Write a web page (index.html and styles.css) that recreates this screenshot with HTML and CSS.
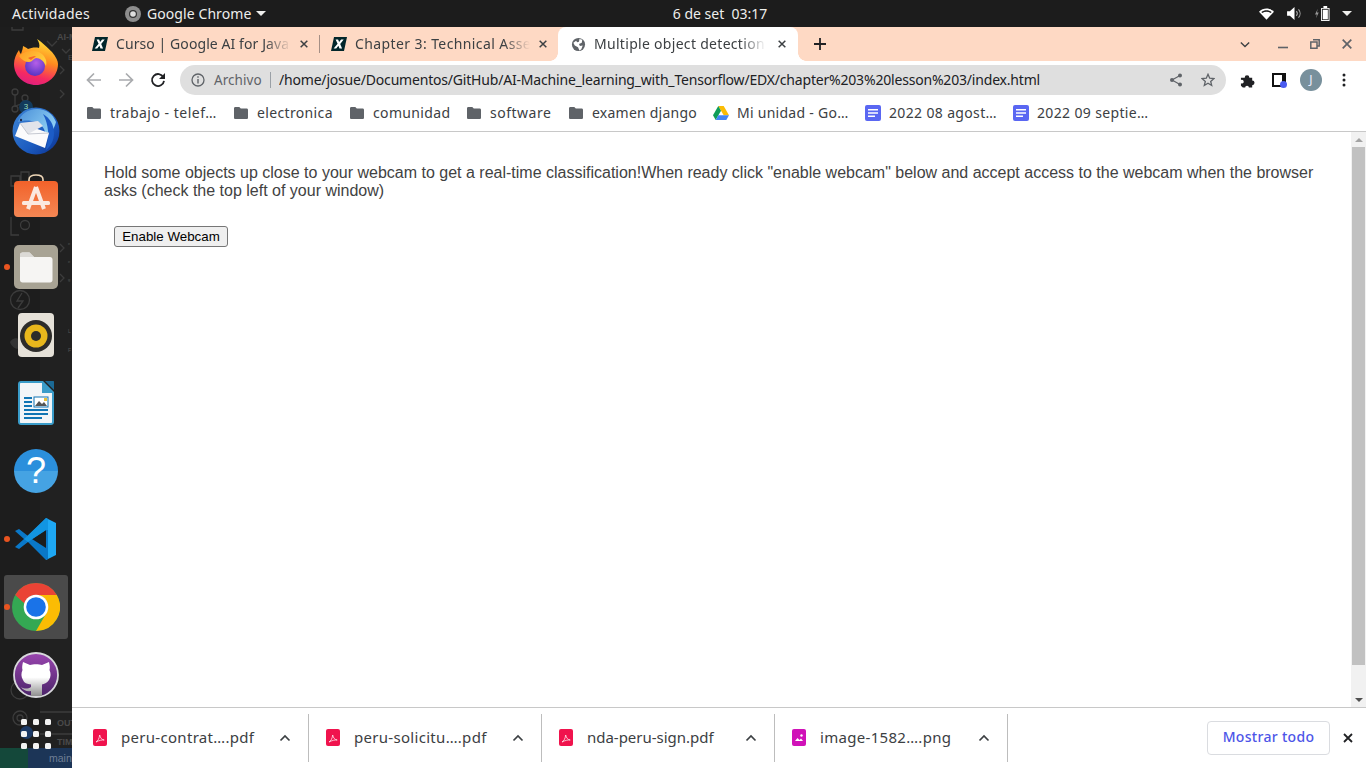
FILE: index.html
```html
<!DOCTYPE html>
<html lang="es">
<head>
<meta charset="utf-8">
<title>Multiple object detection</title>
<link rel="stylesheet" href="styles.css">
</head>
<body>
<svg class="defs" width="0" height="0">
  <defs>
    <symbol id="i-x" viewBox="0 0 12 12"><path d="M2 2l8 8M10 2l-8 8" fill="none" stroke="currentColor" stroke-width="1.800"/></symbol>
    <symbol id="i-edx" viewBox="0 0 16 16"><path d="M3 1h13l-3 14H0z" fill="#02262b"/><path d="M4.600 3.500h2.500l1 2.600 2-2.600h2.600L9.200 8l1.900 4.500H8.500L7.400 9.700l-2.200 2.800H2.600l4-4.700z" fill="#fff"/></symbol>
    <symbol id="i-folder" viewBox="0 0 14 12"><path d="M1.300 0h4l1.500 1.600h5.900c.7 0 1.300.6 1.300 1.300v7.800c0 .7-.6 1.300-1.300 1.300H1.300C.6 12 0 11.400 0 10.700V1.300C0 .6.600 0 1.300 0z" fill="#5f6368"/></symbol>
    <symbol id="i-doc" viewBox="0 0 16 16"><rect width="16" height="16" rx="2" fill="#5a67f2"/><path d="M3 4h10v1.600H3zM3 7.200h10v1.600H3zM3 10.400h7V12H3z" fill="#fff"/></symbol>
    <symbol id="i-pdf" viewBox="0 0 14 17"><rect width="14" height="17" rx="2" fill="#f0134d"/><path d="M3 13c2-1 3.200-3.500 3.700-7 .6 3 2 4.600 4.500 5-2.500-.2-5 .4-8.200 2z" fill="none" stroke="#fff" stroke-width=".7"/></symbol>
    <symbol id="i-png" viewBox="0 0 14 17"><rect width="14" height="17" rx="2" fill="#d012b8"/><path d="M3 12l2.500-3 2 2 1.500-1.500L11 12z" fill="#fff"/><circle cx="9.500" cy="6.500" r="1.200" fill="#fff"/></symbol>
    <symbol id="i-up" viewBox="0 0 12 8"><path d="M1.500 6.500L6 2l4.500 4.500" fill="none" stroke="currentColor" stroke-width="1.700"/></symbol>
  </defs>
</svg>

<header class="topbar">
  <div class="topbar-left">
    <span class="activities">Actividades</span>
    <span class="appname">
      <svg class="app-icon" viewBox="0 0 16 16"><circle cx="8" cy="8" r="8" fill="#8d8d8d"/><circle cx="8" cy="8" r="4" fill="#333"/><circle cx="8" cy="8" r="2.800" fill="#ddd"/></svg>
      Google Chrome
      <span class="caret"></span>
    </span>
  </div>
  <div class="clock">6 de set&nbsp; 03:17</div>
  <div class="tray">
    <svg class="tray-wifi" viewBox="0 0 16 12"><path d="M0 3.500C4.500-.9 11.500-.9 16 3.500L8 12z" fill="#fff"/><path d="M2.500 3.800c3.300-2.300 7.700-2.300 11 0L12.500 5c-2.800-1.700-6.200-1.700-9 0z" fill="#1c1c1c"/></svg>
    <svg class="tray-vol" viewBox="0 0 16 14"><path d="M0 4.500h3L8 0v14l-5-4.500H0z" fill="#fff"/><path d="M10 4.500c1.300 1.500 1.300 3.500 0 5M12.300 2.500c2.300 2.600 2.300 6.400 0 9" fill="none" stroke="#aaa" stroke-width="1.100"/></svg>
    <svg class="tray-bat" viewBox="0 0 16 16"><path d="M3 3L0 9h2l-1 4 3-6H2z" fill="#999"/><path d="M9 2V0h4v2h2.500v14H6.500V2z" fill="#fff"/><rect x="7.500" y="3" width="7" height="12" fill="#1c1c1c"/><rect x="8.300" y="4" width="5.400" height="10.200" fill="#fff"/></svg>
    <span class="caret"></span>
  </div>
</header>

<main class="desktop">
  <nav class="dock">
    <div class="dock-ghost">
      <svg class="ghost-art" viewBox="0 0 72 741">
        <g fill="none" stroke="#3c3c3c" stroke-width="1.300">
          <path d="M12 0v3h11V0"/>
          <circle cx="15" cy="65" r="3"/><circle cx="15" cy="82" r="3"/><circle cx="25" cy="71" r="3"/><path d="M15 68v11M25 74c0 4-10 3-10 6"/>
          <path d="M11 149h9v10h-9zM21 145h8v9h-8z"/>
          <path d="M11 190v18h8"/><circle cx="25" cy="198" r="4.500"/>
          <circle cx="20" cy="273" r="9.500"/><path d="M22 266l-5 8h6l-5 7"/>
          <circle cx="20" cy="663" r="9"/>
          <circle cx="20" cy="691" r="7"/><circle cx="20" cy="691" r="3"/>
          <path d="M40 685h32M40 707h32"/>
          <path d="M47 14l5 5 5-5M60 39l4 4-4 4M60 63l4 4-4 4M62 22l4 4 4-4M60 247l4 4-4 4M60 217l4 4-4 4"/>
        </g>
        <path d="M10 315c2-4 7-5 10-2v8c-3 2-8 0-10-6z" fill="#333"/>
      </svg>
      <span class="ghost g-ai">AI-M</span>
      <span class="ghost g-e">E</span>
      <span class="ghost g-e2">e</span>
      <span class="ghost g-e3">e</span>
      <span class="ghost g-g">g</span>
      <span class="ghost g-l">L</span>
      <span class="ghost g-r">F</span>
      <span class="ghost g-out">OUT</span>
      <span class="ghost g-tim">TIM</span>
      <span class="g-green"></span>
      <span class="g-blue">main</span>
      <span class="g-badge">3</span>
      <span class="g-update"></span>
    </div>

    <div class="dock-item">
      <svg class="ico-ff" viewBox="0 0 44 46">
        <defs>
          <linearGradient id="ffa" x1=".7" y1="0" x2=".4" y2="1"><stop offset="0" stop-color="#ffe53a"/><stop offset=".45" stop-color="#ff8a1f"/><stop offset=".8" stop-color="#f52a62"/><stop offset="1" stop-color="#e0207e"/></linearGradient>
          <radialGradient id="ffb" cx=".55" cy=".35" r=".7"><stop offset="0" stop-color="#b55fe8"/><stop offset="1" stop-color="#5030c0"/></radialGradient>
          <linearGradient id="ffc" x1="0" y1="0" x2="1" y2=".6"><stop offset="0" stop-color="#ff9a26"/><stop offset="1" stop-color="#ffcf3c"/></linearGradient>
        </defs>
        <path d="M23 0c5 3 11 9 15 13 4 5 6 9 6 12 0 12-10 21-22 21S0 37 0 25c0-5 2-10 5-14 .5 2 1 3 2 4 1-3 2-6 2-8 2 1 4 2 5 3 3-1 7-2 11-1 1-3 0-6-2-9z" fill="url(#ffa)"/>
        <circle cx="21" cy="27" r="10" fill="url(#ffb)"/>
        <path d="M5 17c4-4 9-5 14-5 6 0 11 3 13 9 .5 2 .5 4 0 6-2-5-6-8-10-8l-2 1c-2 2-3 3-5 3-4 0-7-2-10-6z" fill="url(#ffc)"/>
        <path d="M22 17c-3 0-6 1-8 2l3 2c2-2 3-2 5-4z" fill="#f7642a"/>
      </svg>
    </div>

    <div class="dock-item">
      <svg class="ico48" viewBox="0 0 48 48">
        <defs>
          <linearGradient id="tb" x1="0" y1="0" x2="1" y2="1"><stop offset="0" stop-color="#3f86d6"/><stop offset=".6" stop-color="#1c5cc0"/><stop offset="1" stop-color="#0a2f8f"/></linearGradient>
          <linearGradient id="tb2" x1="0" y1="0" x2="1" y2=".6"><stop offset="0" stop-color="#4a8fd8"/><stop offset="1" stop-color="#8fd0f4"/></linearGradient>
        </defs>
        <circle cx="24" cy="24" r="23.500" fill="url(#tb)"/>
        <path d="M6 15c3-8 10-13 19-13 9 0 16 5 19 13-2 8-6 12-10 14-1-7-4-12-10-14-6-2-13-2-18 0z" fill="url(#tb2)"/>
        <path d="M31 7c7 4 11 11 11 19 0 7-3 13-8 17 1-6 3-12 2-19-.5-6-2-12-5-17z" fill="#1c5cc6"/>
        <path d="M3 29L8 16l29 10-4 15z" fill="#fbfbfc"/>
        <path d="M8 16l18-2 5 5-15 8z" fill="#e2e4ea"/>
        <path d="M8 16l8 11 21-1" fill="none" stroke="#b9bcc6" stroke-width=".8"/>
        <circle cx="9" cy="13" r="1.200" fill="#1c2c50"/>
      </svg>
    </div>

    <div class="dock-item">
      <svg class="ico44 store" viewBox="0 0 44 44">
        <defs><linearGradient id="st" x1="0" y1="0" x2="0" y2="1"><stop offset="0" stop-color="#f2622a"/><stop offset="1" stop-color="#f48754"/></linearGradient></defs>
        <path d="M15 8V5.500C15 2.500 18 1 22 1s7 1.500 7 4.500V8" fill="none" stroke="#f0d8b8" stroke-width="1.600"/>
        <rect y="7" width="44" height="36" rx="4" fill="url(#st)"/>
        <path d="M22 13l-8 22M22 13l8 22" stroke="#fbe9e0" stroke-width="4" fill="none"/>
        <rect x="8" y="27" width="28" height="4" rx="1.500" fill="#fbe9e0"/>
      </svg>
    </div>

    <div class="dock-item">
      <span class="run-dot"></span>
      <svg class="ico44" viewBox="0 0 44 44">
        <rect width="44" height="44" rx="5" fill="#a8a394"/>
        <path d="M6 10c0-1.500 1-2.500 2.500-2.500h7L20 12h16c1.500 0 2.500 1 2.500 2.500V35c0 1.500-1 2.500-2.500 2.500H8.500C7 37.500 6 36.500 6 35z" fill="#f6f5f3"/>
        <path d="M6 10c0-1.500 1-2.500 2.500-2.500h7L20 12H6z" fill="#dcdad6"/>
      </svg>
    </div>

    <div class="dock-item">
      <svg class="ico-rb" viewBox="0 0 36 44">
        <rect width="36" height="44" rx="4" fill="#e5e1d8"/>
        <circle cx="18" cy="23" r="16" fill="#2d2c2a"/>
        <circle cx="18" cy="23" r="11.500" fill="#e8b71c"/>
        <circle cx="18" cy="23" r="5" fill="#2d2c2a"/>
      </svg>
    </div>

    <div class="dock-item">
      <svg class="ico-rb" viewBox="0 0 36 44">
        <path d="M3 0h22l11 11v30c0 1.700-1.300 3-3 3H3c-1.700 0-3-1.300-3-3V3c0-1.700 1.300-3 3-3z" fill="#3a9cc9"/>
        <path d="M3 2h21v10h10v29c0 .6-.4 1-1 1H3c-.6 0-1-.4-1-1V3c0-.6.400-1 1-1z" fill="#f2f5f8"/>
        <path d="M27 0l9 9V1c0-.6-.4-1-1-1z" fill="#1b6a96"/>
        <path d="M6 16h8v2H6zM6 20h8v2H6zM6 24h8v2H6zM6 28h24v2H6zM6 32h24v2H6zM6 36h18v2H6z" fill="#1175b4"/>
        <rect x="16" y="16" width="14" height="10" fill="#fff" stroke="#1175b4"/>
        <path d="M17 25l4-5 3 3 2-2 3 4z" fill="#555"/>
        <rect x="26" y="17" width="3" height="3" fill="#e8c13a"/>
      </svg>
    </div>

    <div class="dock-item">
      <div class="help-icon">?</div>
    </div>

    <div class="dock-item">
      <span class="run-dot"></span>
      <svg class="ico44" viewBox="0 0 44 44">
        <path d="M32 1l10 5v32l-10 5V1z" fill="#1ea8f4"/>
        <path d="M32 1L14 19 5 12 1 14l9 8-9 8 4 2 9-7 18 18 2-1V3z" fill="#0a78c8"/>
        <path d="M32 13v18L18 22z" fill="#1c1c1c"/>
        <path d="M32 1l2 1v11l-2 0L14 25l-4-3z" fill="#1295e2"/>
      </svg>
    </div>

    <div class="dock-item dock-active">
      <span class="run-dot"></span>
      <svg class="ico48" viewBox="0 0 48 48">
        <circle cx="24" cy="24" r="24" fill="#34a853"/>
        <path d="M24 0a24 24 0 0 1 20.800 12H24a12 12 0 0 0-11.500 8.500L3.200 12A24 24 0 0 1 24 0z" fill="#ea4335"/>
        <path d="M44.800 12A24 24 0 0 1 24 48l10.400-18A12 12 0 0 0 34.400 18 12 12 0 0 0 24 12z" fill="#fbbc04"/>
        <circle cx="24" cy="24" r="12.300" fill="#fff"/>
        <circle cx="24" cy="24" r="9.800" fill="#1a73e8"/>
      </svg>
    </div>

    <div class="dock-item">
      <svg class="ico46" viewBox="0 0 46 46">
        <defs><linearGradient id="gh" x1="0" y1="0" x2="0" y2="1"><stop offset="0" stop-color="#9a45b0"/><stop offset="1" stop-color="#4a2468"/></linearGradient>
        <linearGradient id="gh2" x1="0" y1="0" x2="0" y2="1"><stop offset=".45" stop-color="#fff"/><stop offset="1" stop-color="#8f8f8f"/></linearGradient></defs>
        <circle cx="23" cy="23" r="22" fill="url(#gh)" stroke="#d8d8dc" stroke-width="1.800"/>
        <path d="M10 10l7 3c3-1 9-1 12 0l7-3c1 4 1 6 .5 8 1.500 3 1.500 7-.5 10-2 3-5 4-7 4.500V44H18v-5c-4 1-8-1-10-4 3 2 7 2 10 0v-2.500c-4-.5-7-1.500-8-4.500-2-3-2-7-.5-10-.5-2-.5-4 .5-8z" fill="url(#gh2)"/>
      </svg>
    </div>

    <div class="dock-item">
      <div class="apps-grid"><i></i><i></i><i></i><i></i><i></i><i></i><i></i><i></i><i></i></div>
    </div>
  </nav>

  <section class="chrome">
    <div class="tabstrip">
      <div class="tab tab-1">
        <svg class="favicon"><use href="#i-edx"/></svg>
        <span class="tab-title">Curso | Google AI for Java</span>
        <svg class="tab-x"><use href="#i-x"/></svg>
      </div>
      <span class="tab-sep"></span>
      <div class="tab tab-2">
        <svg class="favicon"><use href="#i-edx"/></svg>
        <span class="tab-title">Chapter 3: Technical Asse</span>
        <svg class="tab-x"><use href="#i-x"/></svg>
      </div>
      <div class="tab tab-active">
        <svg class="favicon" viewBox="0 0 16 16"><circle cx="8" cy="8" r="7" fill="#5f6368"/><path d="M2.500 6l3-2 1 1.500 2-.5.500-3 3 1-.5 3-3 1.500 1 2 3-.5L11 13l-2 1.500L7.500 11 4 9z" fill="#fff"/></svg>
        <span class="tab-title">Multiple object detection</span>
        <svg class="tab-x"><use href="#i-x"/></svg>
      </div>
      <svg class="newtab" viewBox="0 0 12 12"><path d="M6 0v12M0 6h12" stroke="#202124" stroke-width="1.800" fill="none"/></svg>
      <div class="win-controls">
        <svg class="win-chev" viewBox="0 0 12 8"><path d="M1 1.500l5 5 5-5" fill="none" stroke="#3c4043" stroke-width="1.600"/></svg>
        <svg class="win-min" viewBox="0 0 10 10"><path d="M0 8.500h10" stroke="#5f6368" stroke-width="1.600"/></svg>
        <svg class="win-max" viewBox="0 0 10 10"><path d="M3 .8h6.200V7H7M.8 3h6.200v6.200H.8z" fill="none" stroke="#5f6368" stroke-width="1.500"/></svg>
        <svg class="win-close" viewBox="0 0 10 10"><path d="M.7.700l8.600 8.600M9.300.7L.7 9.300" stroke="#5f6368" stroke-width="1.700"/></svg>
      </div>
    </div>

    <div class="toolbar">
      <svg class="nav-ico" viewBox="0 0 16 16"><path d="M15 8H2M8 1.500L1.500 8 8 14.500" fill="none" stroke="#a9abae" stroke-width="1.700"/></svg>
      <svg class="nav-ico" viewBox="0 0 16 16"><path d="M1 8h13M8 1.500L14.500 8 8 14.500" fill="none" stroke="#a9abae" stroke-width="1.700"/></svg>
      <svg class="nav-ico" viewBox="0 0 16 16"><path d="M13.400 5.300A6 6 0 1 0 14 8.800" fill="none" stroke="#202124" stroke-width="1.800"/><path d="M15 1v6H9z" fill="#202124"/></svg>
      <div class="omnibox">
        <svg class="omni-info" viewBox="0 0 14 14"><circle cx="7" cy="7" r="6" fill="none" stroke="#5f6368" stroke-width="1.300"/><path d="M7 6v4.500M7 3.300v1.500" stroke="#5f6368" stroke-width="1.400"/></svg>
        <span class="omni-label">Archivo</span>
        <span class="omni-sep"></span>
        <span class="omni-url">/home/josue/Documentos/GitHub/AI-Machine_learning_with_Tensorflow/EDX/chapter%203%20lesson%203/index.html</span>
        <svg class="omni-share" viewBox="0 0 14 14"><path d="M11 2.500L3 7l8 4.500" fill="none" stroke="#5f6368" stroke-width="1.200"/><circle cx="11" cy="2.500" r="2" fill="#5f6368"/><circle cx="3" cy="7" r="2" fill="#5f6368"/><circle cx="11" cy="11.500" r="2" fill="#5f6368"/></svg>
        <svg class="omni-star" viewBox="0 0 14 14"><path d="M7 1.300l1.700 3.900 4.200.4-3.200 2.800 1 4.100L7 10.300l-3.700 2.200 1-4.100L1.100 5.600l4.200-.4z" fill="none" stroke="#5f6368" stroke-width="1.300"/></svg>
      </div>
      <svg class="tool-ext" viewBox="0 0 16 16"><path d="M1 5h4a2.500 2.500 0 1 1 5 0h3v3a2.500 2.500 0 1 1 0 5v2.500H9.500a2 2 0 1 0-4 0H3L1 13.500v-2.500a2 2 0 1 0 0-3.500z" fill="#202124"/></svg>
      <span class="tool-panel"><span class="tool-panel-dot"></span></span>
      <span class="avatar">J</span>
      <svg class="tool-menu" viewBox="0 0 4 14"><circle cx="2" cy="2" r="1.500" fill="#202124"/><circle cx="2" cy="7" r="1.500" fill="#202124"/><circle cx="2" cy="12" r="1.500" fill="#202124"/></svg>
    </div>

    <div class="bookmarks">
      <span class="bm bm-1"><svg class="bm-folder"><use href="#i-folder"/></svg>trabajo - telef…</span>
      <span class="bm bm-2"><svg class="bm-folder"><use href="#i-folder"/></svg>electronica</span>
      <span class="bm bm-3"><svg class="bm-folder"><use href="#i-folder"/></svg>comunidad</span>
      <span class="bm bm-4"><svg class="bm-folder"><use href="#i-folder"/></svg>software</span>
      <span class="bm bm-5"><svg class="bm-folder"><use href="#i-folder"/></svg>examen django</span>
      <span class="bm bm-6"><svg class="bm-doc" viewBox="0 0 16 14"><path d="M5.300 0h5.400L16 9.300h-5.300z" fill="#fbbc04"/><path d="M5.300 0L0 9.300 2.700 14l5.300-9.300z" fill="#0f9d58"/><path d="M2.700 14h10.600L16 9.300H5.300z" fill="#4285f4"/></svg>Mi unidad - Go…</span>
      <span class="bm bm-7"><svg class="bm-doc"><use href="#i-doc"/></svg>2022 08 agost…</span>
      <span class="bm bm-8"><svg class="bm-doc"><use href="#i-doc"/></svg>2022 09 septie…</span>
    </div>

    <div class="viewport">
      <article class="page">
        <p class="page-text">Hold some objects up close to your webcam to get a real-time classification!When ready click "enable webcam" below and accept access to the webcam when the browser asks (check the top left of your window)</p>
        <button class="webcam-btn" type="button">Enable Webcam</button>
      </article>
      <div class="scrollbar">
        <span class="sb-arrow sb-up"></span>
        <span class="sb-track"><span class="sb-thumb"></span></span>
        <span class="sb-arrow sb-down"></span>
      </div>
    </div>

    <footer class="downloads">
      <div class="dl"><svg class="dl-ico"><use href="#i-pdf"/></svg><span class="dl-name dl-long">peru-contrat….pdf</span><svg class="dl-up"><use href="#i-up"/></svg></div>
      <div class="dl"><svg class="dl-ico"><use href="#i-pdf"/></svg><span class="dl-name dl-long">peru-solicitu….pdf</span><svg class="dl-up"><use href="#i-up"/></svg></div>
      <div class="dl"><svg class="dl-ico"><use href="#i-pdf"/></svg><span class="dl-name">nda-peru-sign.pdf</span><svg class="dl-up"><use href="#i-up"/></svg></div>
      <div class="dl"><svg class="dl-ico"><use href="#i-png"/></svg><span class="dl-name dl-long">image-1582….png</span><svg class="dl-up"><use href="#i-up"/></svg></div>
      <span class="dl-spacer"></span>
      <button class="show-all" type="button">Mostrar todo</button>
      <svg class="dl-close"><use href="#i-x"/></svg>
    </footer>
  </section>
</main>
</body>
</html>
```

FILE: styles.css
```css
* { box-sizing: border-box; }
html, body { margin: 0; height: 100%; overflow: hidden; }
body {
  width: 1366px;
  height: 768px;
  display: flex;
  flex-direction: column;
  font-family: "Noto Sans", "Open Sans", sans-serif;
  background: #1f1f1f;
}
.defs { position: absolute; }

/* top bar */
.topbar {
  height: 27px;
  flex: none;
  background: #1c1c1c;
  color: #eeeeec;
  display: grid;
  grid-template-columns: 1fr auto 1fr;
  align-items: center;
  font-size: 14px;
  line-height: 27px;
}
.topbar-left { display: flex; align-items: center; padding-left: 12px; }
.activities { width: 113px; letter-spacing: .3px; }
.appname { display: flex; align-items: center; gap: 6px; letter-spacing: .08px; }
.app-icon { width: 16px; height: 16px; }
.caret {
  width: 0; height: 0;
  border-left: 5px solid transparent;
  border-right: 5px solid transparent;
  border-top: 5px solid #eeeeec;
  margin-left: -1px;
}
.clock { font-size: 14px; margin-left: 74px; }
.tray { display: flex; align-items: center; justify-content: flex-end; padding-right: 14px; }
.tray-wifi { width: 15px; height: 12px; margin-right: 13px; }
.tray-vol { width: 15px; height: 13px; margin-right: 13px; }
.tray-bat { width: 15px; height: 15px; margin-right: 13px; }

.desktop { flex: 1; display: flex; min-height: 0; }

/* dock */
.dock {
  width: 72px;
  flex: none;
  position: relative;
  display: flex;
  flex-direction: column;
  padding-top: 2px;
  background: linear-gradient(90deg, #1d1d1d 0, #1d1d1d 40px, #212121 40px);
  overflow: hidden;
}
.dock-item {
  position: relative;
  height: 68px;
  flex: none;
  display: flex;
  align-items: center;
  justify-content: center;
}
.dock-active::before {
  content: "";
  position: absolute;
  inset: 2px 4px;
  background: #4a4a4a;
  border-radius: 3px;
}
.dock-item svg { position: relative; }
.ico44 { width: 44px; height: 44px; }
.ico46 { width: 46px; height: 46px; }
.ico48 { width: 48px; height: 48px; }
.ico-ff { width: 44px; height: 46px; margin-top: -2px; }
.store { margin-top: -6px; }
.ico-rb { width: 36px; height: 44px; }
.run-dot {
  position: absolute;
  left: 4px;
  top: 31px;
  width: 6px;
  height: 6px;
  border-radius: 50%;
  background: #e95420;
  z-index: 2;
}
.help-icon {
  position: relative;
  width: 44px;
  height: 44px;
  border-radius: 50%;
  background: linear-gradient(180deg, #2b8fdc 0 50%, #45a3e3 50% 100%);
  color: #fff;
  font: 36px/44px "Liberation Sans", sans-serif;
  text-align: center;
}
.apps-grid {
  position: relative;
  display: grid;
  grid-template-columns: repeat(3, 6px);
  grid-auto-rows: 6px;
  gap: 6px;
  margin-top: -18px;
}
.apps-grid i { background: #f3f3f3; border-radius: 1.500px; }

.dock-ghost { position: absolute; inset: 0; pointer-events: none; font-size: 11px; color: #4a4a4a; }
.ghost-art { position: absolute; left: 0; top: 0; width: 72px; height: 741px; }
.ghost { position: absolute; white-space: nowrap; line-height: 12px; font-family: "Liberation Sans", sans-serif; }
.g-ai { left: 57px; top: 4px; font-weight: 700; font-size: 9px; }
.g-e { left: 68px; top: 25px; font-size: 8px; }
.g-e2 { left: 68px; top: 211px; font-size: 4px; color: #555; }
.g-e3 { left: 68px; top: 229px; font-size: 4px; color: #555; }
.g-g { left: 68px; top: 247px; font-size: 4px; color: #555; }
.g-l { left: 68px; top: 298px; font-size: 5px; color: #555; }
.g-r { left: 68px; top: 317px; font-size: 5px; color: #555; }
.g-out { left: 57px; top: 690px; font-weight: 700; font-size: 9px; }
.g-tim { left: 57px; top: 709px; font-weight: 700; font-size: 9px; }
.g-green { position: absolute; left: 0; bottom: 0; width: 28px; height: 20px; background: #14483a; }
.g-blue { position: absolute; left: 28px; bottom: 0; width: 44px; height: 20px; background: #1c3557; color: #6f7f95; font: 10.500px/20px "Liberation Sans", sans-serif; padding-left: 21px; }
.g-badge { position: absolute; left: 19px; top: 73px; width: 14px; height: 14px; border-radius: 50%; background: #123a5c; color: #9db; font: 8px/14px "Liberation Sans", sans-serif; text-align: center; }
.g-update { position: absolute; left: 20px; top: 699px; width: 13px; height: 13px; border-radius: 50%; background: #1c3a66; }

/* chrome window */
.chrome { flex: 1; min-width: 0; display: flex; flex-direction: column; background: #fff; }

.tabstrip {
  height: 34px;
  flex: none;
  background: #fed9c4;
  display: flex;
  align-items: center;
  padding-left: 8px;
  color: #3c4043;
}
.tab {
  height: 34px;
  flex: none;
  display: flex;
  align-items: center;
  font-size: 14px;
}
.tab-1 { width: 239px; padding-left: 12px; }
.tab-2 { width: 238px; padding-left: 11px; }
.tab-sep { width: 1px; height: 18px; background: #a58f85; flex: none; }
.favicon { width: 16px; height: 16px; flex: none; }
.tab-title {
  margin: -2px 0 0 8px;
  width: 175px;
  flex: none;
  white-space: nowrap;
  overflow: hidden;
  -webkit-mask-image: linear-gradient(90deg, #000 85%, transparent);
  mask-image: linear-gradient(90deg, #000 85%, transparent);
}
.tab-1 .tab-title { letter-spacing: .08px; }
.tab-2 .tab-title { letter-spacing: .4px; }
.tab-x { width: 10px; height: 10px; flex: none; margin-left: 8px; color: #3c4043; }
.tab-active {
  background: #fff;
  width: 240px;
  padding-left: 13px;
  border-radius: 8px 8px 0 0;
  position: relative;
}
.tab-active::before, .tab-active::after {
  content: "";
  position: absolute;
  bottom: 0;
  width: 8px;
  height: 8px;
}
.tab-active::before { left: -8px; background: radial-gradient(circle at 0 0, transparent 7.500px, #fff 8px); }
.tab-active::after { right: -8px; background: radial-gradient(circle at 100% 0, transparent 7.500px, #fff 8px); }
.tab-active .favicon { width: 15px; height: 15px; }
.tab-active .tab-title { margin-left: 8px; width: 172px; letter-spacing: .3px; }
.tab-active .tab-x { margin-left: 11px; }
.newtab { width: 12px; height: 12px; margin-left: 16px; flex: none; }
.win-controls { margin-left: auto; display: flex; align-items: center; padding-right: 14px; }
.win-chev { width: 10px; height: 7px; margin-right: 28px; }
.win-min { width: 10px; height: 10px; margin-right: 22px; }
.win-max { width: 10px; height: 10px; margin-right: 22px; }
.win-close { width: 10px; height: 10px; }

.toolbar {
  height: 38px;
  flex: none;
  display: flex;
  align-items: center;
  padding-left: 14px;
  background: #fff;
}
.nav-ico { width: 16px; height: 16px; flex: none; margin-right: 16px; }
.omnibox {
  width: 1046px;
  height: 30px;
  margin-left: -2px;
  flex: none;
  border-radius: 15px;
  background: #dfdfdf;
  display: flex;
  align-items: center;
  padding-left: 11px;
  font-size: 14px;
  white-space: nowrap;
}
.omni-info { width: 14px; height: 14px; flex: none; }
.omni-label { margin-left: 9px; color: #5f6368; font-size: 13.500px; width: 48px; letter-spacing: .05px; }
.omni-sep { width: 1px; height: 16px; background: #9aa0a6; margin: 0 8px; flex: none; }
.omni-url { color: #202124; width: 850px; overflow: hidden; flex: none; letter-spacing: -.19px; margin-top: -1px; }
.omni-share { width: 14px; height: 14px; margin-left: 40px; flex: none; }
.omni-star { width: 14px; height: 14px; margin-left: 18px; flex: none; }
.tool-ext { width: 15px; height: 15px; margin-left: 14px; flex: none; }
.tool-panel {
  position: relative;
  width: 14px;
  height: 14px;
  margin-left: 17px;
  border: 2px solid #111;
  border-right-width: 4px;
  flex: none;
}
.tool-panel-dot { position: absolute; right: -5px; bottom: -3px; width: 7px; height: 7px; border-radius: 50%; background: #4a5cf0; }
.avatar {
  width: 22px;
  height: 22px;
  margin-left: 14px;
  border-radius: 50%;
  background: #78909c;
  color: #eef;
  font-size: 12px;
  line-height: 22px;
  text-align: center;
  flex: none;
}
.tool-menu { width: 4px; height: 14px; margin-left: 20px; flex: none; }

.bookmarks {
  height: 33px;
  flex: none;
  display: flex;
  align-items: center;
  padding: 0 0 6px 15px;
  border-bottom: 1px solid #c8c8c8;
  font-size: 14px;
  letter-spacing: .35px;
  color: #3c4043;
  white-space: nowrap;
}
.bm { display: flex; align-items: center; flex: none; }
.bm-folder { width: 14px; height: 12px; margin: 2px 9px 0 0; flex: none; }
.bm-doc { width: 16px; height: 16px; margin: 2px 8px 0 0; flex: none; }
.bm-1 { width: 147px; letter-spacing: .5px; }
.bm-2 { width: 116px; }
.bm-3 { width: 117px; }
.bm-4 { width: 102px; letter-spacing: .5px; }
.bm-5 { width: 144px; letter-spacing: .23px; }
.bm-6 { width: 152px; letter-spacing: .27px; }
.bm-7 { width: 148px; }

.viewport { flex: 1; min-height: 0; display: flex; background: #fff; }
.page { flex: 1; min-width: 0; padding: 32px 32px 0; }
.page-text {
  margin: 0;
  font: 16px/18px "Liberation Sans", sans-serif;
  color: #424242;
}
.webcam-btn {
  display: block;
  margin: 26px 0 0 10px;
  width: 114px;
  height: 21px;
  padding: 0;
  font: 13.333px "Liberation Sans", sans-serif;
  color: #000;
  background: #efefef;
  border: 1px solid #767676;
  border-radius: 3px;
}
.scrollbar { width: 15px; flex: none; background: #f1f1f1; display: flex; flex-direction: column; align-items: center; }
.sb-arrow { height: 15px; flex: none; width: 15px; position: relative; }
.sb-arrow::after { content: ""; position: absolute; left: 4px; top: 6px; border-left: 4px solid transparent; border-right: 4px solid transparent; }
.sb-up::after { border-bottom: 4px solid #a3a3a3; }
.sb-down::after { border-top: 4px solid #505050; }
.sb-track { flex: 1; width: 100%; padding: 0 1px; }
.sb-thumb { display: block; height: 518px; background: #c1c1c1; }

.downloads {
  height: 61px;
  flex: none;
  display: flex;
  align-items: center;
  border-top: 1px solid #c8c8c8;
  padding-left: 4px;
  background: #fff;
  color: #3c4043;
}
.dl {
  width: 233px;
  height: 48px;
  flex: none;
  display: flex;
  align-items: center;
  padding-left: 17px;
  border-right: 1px solid #bdbdbd;
  font-size: 15px;
}
.dl-ico { width: 14px; height: 17px; flex: none; margin-top: -1px; }
.dl-name { margin: -2px 0 0 14px; width: 155px; white-space: nowrap; flex: none; letter-spacing: -.02px; }
.dl-long { letter-spacing: .3px; }
.dl-up { width: 12px; height: 8px; margin-left: 3px; color: #3c4043; flex: none; }
.dl-spacer { flex: 1; }
.show-all {
  width: 123px;
  height: 34px;
  border: 1px solid #dadce0;
  border-radius: 4px;
  background: #fff;
  color: #4d55e8;
  font: 500 14px "Noto Sans", sans-serif;
  letter-spacing: .3px;
  padding: 0 0 3px;
}
.dl-close { width: 12px; height: 12px; margin: 0 12px; color: #202124; flex: none; }
```
